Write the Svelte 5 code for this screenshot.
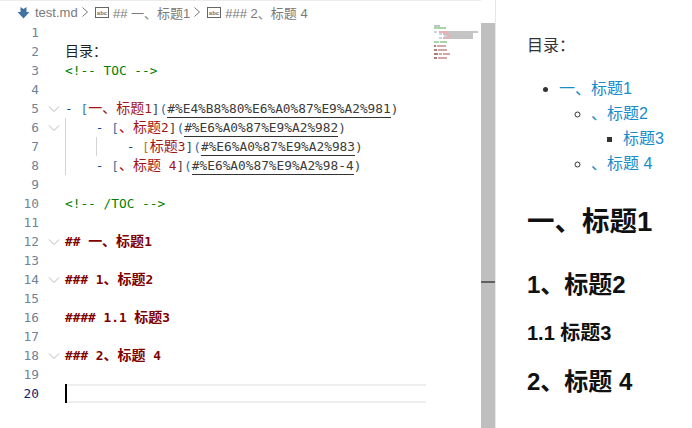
<script>
	// token kinds: t plain, c comment, d dash, b bracket, r red text, u url, h heading
	const lines = [
		[],
		[['t', '目录：']],
		[['c', '<!-- TOC -->']],
		[],
		[['d', '- '], ['b', '['], ['r', '一、标题1'], ['e', ']'], ['p', '('], ['u', '#%E4%B8%80%E6%A0%87%E9%A2%981'], ['e', ')']],
		[['s', '    '], ['d', '- '], ['b', '['], ['r', '、标题2'], ['e', ']'], ['p', '('], ['u', '#%E6%A0%87%E9%A2%982'], ['e', ')']],
		[['s', '        '], ['d', '- '], ['o', '['], ['r', '标题3'], ['e', ']'], ['p', '('], ['u', '#%E6%A0%87%E9%A2%983'], ['e', ')']],
		[['s', '    '], ['d', '- '], ['b', '['], ['r', '、标题 4'], ['e', ']'], ['p', '('], ['u', '#%E6%A0%87%E9%A2%98-4'], ['e', ')']],
		[],
		[['c', '<!-- /TOC -->']],
		[],
		[['h', '## 一、标题1']],
		[],
		[['h', '### 1、标题2']],
		[],
		[['h', '#### 1.1 标题3']],
		[],
		[['h', '### 2、标题 4']],
		[],
		[]
	];
	const folds = [5, 6, 12, 14, 18];

	// CJK runs get a bigger size so they fill two monospace cells
	const split = (text) => text.split(/([\u3000-\u9fff\uff00-\uffef]+)/).filter(Boolean);
	const isCjk = (part) => /[\u3000-\u9fff\uff00-\uffef]/.test(part);

	// minimap rows: y, x, width, colour
	const minimap = [
		[25, 434, 6, '#c4c4c4'],
		[27, 434, 5, '#a9d6a9'], [27, 439, 7, '#a9d6a9'],
		[31, 434, 3, '#cdd5e3'], [31, 439, 8, '#e0b4b4'], [31, 447, 31, '#c4c4c4'],
		[33, 439, 3, '#cdd5e3'], [33, 443, 6, '#e0b4b4'], [33, 449, 24, '#c4c4c4'],
		[35, 444, 3, '#cdd5e3'], [35, 447, 5, '#e0b4b4'], [35, 452, 21, '#c4c4c4'],
		[37, 439, 3, '#cdd5e3'], [37, 443, 6, '#e0b4b4'], [37, 449, 24, '#c4c4c4'],
		[41, 434, 5, '#a9d6a9'], [41, 440, 7, '#a9d6a9'],
		[45, 434, 2, '#b07a7a'], [45, 437, 9, '#d0a8a8'],
		[49, 434, 3, '#b07a7a'], [49, 438, 9, '#d0a8a8'],
		[53, 434, 4, '#b07a7a'], [53, 439, 3, '#d0a8a8'], [53, 443, 7, '#d0a8a8'],
		[57, 434, 3, '#b07a7a'], [57, 438, 9, '#d0a8a8']
	];
</script>

{#snippet abcIcon()}
	<svg class="sym" width="14" height="11" viewBox="0 0 14 11">
		<rect x="0.5" y="0.5" width="13" height="10" fill="none" stroke="#666" />
		<text x="7" y="7.5" text-anchor="middle" font-size="6" font-weight="bold" fill="#777">abc</text>
	</svg>
{/snippet}

{#snippet crumbSep()}
	<svg class="sep" width="8" height="12" viewBox="0 0 8 12">
		<path d="M1.5 1.5 L6.5 6 L1.5 10.5" fill="none" stroke="#777" stroke-width="1" />
	</svg>
{/snippet}

<div class="window">
	<section class="editor">
		<nav class="crumbs">
			<svg class="md" width="13" height="13" viewBox="0 0 13 13">
				<path d="M3.5 1 L6.5 3 L9.5 1 V6 H12.5 L6.5 12.5 L0.5 6 H3.5 Z" fill="#42729f" />
			</svg>
			<span class="file">test.md</span>
			{@render crumbSep()}
			{@render abcIcon()}
			<span class="crumb">## 一、标题1</span>
			{@render crumbSep()}
			{@render abcIcon()}
			<span class="crumb">### 2、标题 4</span>
		</nav>

		<div class="code">
			{#each lines as tokens, i}
				<div class="row" class:current={i === 19}>
					<span class="num" class:active={i === 19}>{i + 1}</span>
					<span class="fold">
						{#if folds.includes(i + 1)}
							<svg width="12" height="8" viewBox="0 0 12 8">
								<path d="M1 1.5 L6 6.5 L11 1.5" fill="none" stroke="#b9b9b9" stroke-width="1" />
							</svg>
						{/if}
					</span>
					<span class="content">{#if i >= 5 && i <= 7}<i class="guide g1"></i>{/if}{#if i === 6}<i class="guide g2"></i>{/if}{#if i === 19}<i class="caret"></i>{/if}{#each tokens as [kind, text]}<span class={kind}>{#each split(text) as part}<span class:cjk={isCjk(part)}>{part}</span>{/each}</span>{/each}</span>
				</div>
			{/each}
		</div>

		<svg class="minimap" width="46" height="40" viewBox="434 24 46 40">
			{#each minimap as [y, x, w, fill]}
				<rect {x} {y} width={w} height="2" {fill} />
			{/each}
		</svg>
	</section>

	<div class="scrollbar"><i class="mark"></i></div>

	<article class="preview">
		<p>目录：</p>
		<ul class="toc">
			<li>
				<a href="#a">一、标题1</a>
				<ul>
					<li>
						<a href="#b">、标题2</a>
						<ul>
							<li><a href="#c">标题3</a></li>
						</ul>
					</li>
					<li><a href="#d">、标题 4</a></li>
				</ul>
			</li>
		</ul>
		<h2>一、标题1</h2>
		<h3>1、标题2</h3>
		<h4>1.1 标题3</h4>
		<h3>2、标题 4</h3>
	</article>
</div>

<style>
	:global(body) {
		margin: 0;
		background: #fff;
	}
	.window {
		display: flex;
		width: 692px;
		height: 428px;
		overflow: hidden;
		font-family: "Liberation Sans", "Noto Sans CJK SC", sans-serif;
	}
	.editor {
		position: relative;
		width: 481px;
		flex: none;
	}
	.crumbs {
		display: flex;
		align-items: center;
		height: 22px;
		padding: 1px 0 0 17px;
		box-sizing: border-box;
		border-top: 1px solid #ececec;
		font-size: 13px;
		color: #7a7a7a;
	}
	.md {
		margin-right: 5px;
	}
	.file {
		width: 43px;
	}
	.sep {
		margin: 0 6px 0 3px;
	}
	.sym {
		margin: 0 4px 0 0;
	}
	.crumb {
		white-space: pre;
	}
	.code {
		padding-top: 1px;
		font-family: "DejaVu Sans Mono", "Noto Sans CJK SC", monospace;
		font-size: 12.8px;
		line-height: 19px;
	}
	.row {
		display: flex;
		height: 19px;
	}
	.num {
		width: 39px;
		text-align: right;
		color: #6f8396;
		flex: none;
	}
	.num.active {
		color: #0b216f;
	}
	.fold {
		display: flex;
		align-items: center;
		justify-content: center;
		width: 26px;
		padding-left: 4px;
		box-sizing: border-box;
		flex: none;
	}
	.content {
		position: relative;
		width: 361px;
		flex: none;
		box-sizing: border-box;
		white-space: pre;
		color: #1f1f1f;
	}
	.cjk {
		font-family: "Noto Sans CJK SC", sans-serif;
		font-size: 14px;
		line-height: 1;
	}
	.current .content {
		border-top: 2px solid #eeeeee;
		border-bottom: 2px solid #eeeeee;
		height: 19px;
	}
	.guide {
		position: absolute;
		top: 0;
		bottom: 0;
		width: 1px;
		background: #d3d3d3;
	}
	.g1 {
		left: 0;
	}
	.g2 {
		left: 31px;
	}
	.caret {
		position: absolute;
		left: 0;
		top: -2px;
		bottom: -2px;
		width: 2px;
		background: #000;
	}
	.c {
		color: #008000;
	}
	.d {
		color: #0451a5;
	}
	.b {
		color: #47729c;
	}
	.o {
		color: #b5762f;
	}
	.r {
		color: #a31515;
	}
	.e {
		color: #444;
	}
	.p {
		color: #2a6ea8;
	}
	.u {
		color: #3b3b3b;
		border-bottom: 1px solid #333;
		padding-bottom: 1px;
	}
	.h {
		color: #800000;
		font-weight: bold;
	}
	.minimap {
		position: absolute;
		left: 434px;
		top: 24px;
	}
	.scrollbar {
		position: relative;
		width: 14px;
		flex: none;
		margin-top: 23px;
		background: #bfbfbf;
	}
	.mark {
		position: absolute;
		left: 0;
		right: 0;
		top: 258px;
		height: 2px;
		background: #5f5f5f;
	}
	.preview {
		flex: 1;
		border-left: 1px solid #e6e6e6;
		padding: 36px 0 0 31px;
		font-size: 16px;
		color: #333;
	}
	.preview p {
		margin: 0 0 21px;
		font-size: 16px;
		line-height: 19px;
	}
	ul {
		margin: 0;
		padding-left: 32px;
		line-height: 25px;
	}
	.toc {
		list-style: disc;
	}
	.toc ul {
		list-style: circle;
	}
	.toc ul ul {
		list-style: square;
	}
	a {
		color: #178ccb;
		text-decoration: none;
	}
	h2, h3, h4 {
		color: #111;
		margin: 0;
		font-weight: bold;
	}
	h2 {
		font-size: 27.5px;
		line-height: 36px;
		margin-top: 28px;
	}
	h3 {
		font-size: 24px;
		line-height: 31px;
		margin-top: 29px;
	}
	h4 {
		font-size: 20px;
		line-height: 26px;
		margin-top: 20px;
	}
	h4 + h3 {
		margin-top: 20px;
	}
</style>
